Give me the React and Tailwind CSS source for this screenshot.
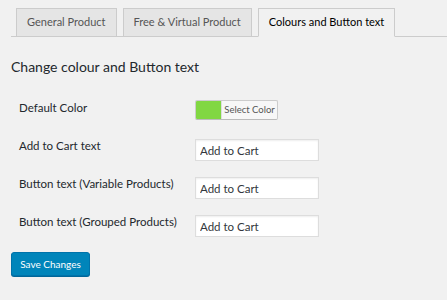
import React from "react";

const tabs = [
  { label: "General Product", active: false },
  { label: "Free & Virtual Product", active: false },
  { label: "Colours and Button text", active: true },
];

const TextRow = ({ label, value }) => (
  <div className="flex items-start h-[38px]">
    <div className="w-[176px] pt-[1px] whitespace-nowrap text-[11.5px] leading-[20px] text-[#23282d]">
      {label}
    </div>
    <input
      type="text"
      defaultValue={value}
      className="w-[124px] h-[22px] mt-[4px] px-[4px] bg-white border border-[#ddd] shadow-[inset_0_1px_2px_rgba(0,0,0,0.07)] text-[11.5px] text-[#32373c] outline-none"
    />
  </div>
);

const App = () => {
  return (
    <div
      className="w-[447px] h-[300px] bg-[#f1f1f1] overflow-hidden"
      style={{ fontFamily: 'Lato, "Open Sans", sans-serif' }}
    >
      <div className="pt-[8px] pl-[11px]">
        <div className="flex items-end gap-[6px] pl-[5px] border-b border-[#ccc]">
          {tabs.map((t) => (
            <div
              key={t.label}
              className={
                t.active
                  ? "h-[29px] -mb-px px-[10px] flex items-center whitespace-nowrap border border-[#ccc] border-b-[#f1f1f1] bg-[#f1f1f1] text-[11px] text-black"
                  : "h-[28px] px-[10px] flex items-center whitespace-nowrap border border-b-0 border-[#ccc] bg-[#e5e5e5] text-[11px] text-[#555]"
              }
            >
              {t.label}
            </div>
          ))}
        </div>

        <h2 className="mt-[20px] text-[14px] leading-[20px] text-[#23282d]">
          Change colour and Button text
        </h2>

        <div className="mt-[21px] pl-[8px]">
          <div className="flex items-start h-[37px]">
            <div className="w-[176px] whitespace-nowrap text-[11.5px] leading-[20px] text-[#23282d]">
              Default Color
            </div>
            <button className="flex mt-[2px] h-[20px] w-[83px] border border-[#ccc] border-b-[#bbb] rounded-[2px] bg-[#f7f7f7] overflow-hidden">
              <span className="w-[25px] h-full bg-[#81d742]" />
              <span className="flex-1 h-full border-l border-[#ddd] flex items-center justify-center whitespace-nowrap text-[9.5px] text-[#555]">
                Select Color
              </span>
            </button>
          </div>
          <TextRow label="Add to Cart text" value="Add to Cart" />
          <TextRow label="Button text (Variable Products)" value="Add to Cart" />
          <TextRow label="Button text (Grouped Products)" value="Add to Cart" />
        </div>

        <button className="mt-[3px] h-[24px] w-[79px] rounded-[3px] border border-[#0073aa] bg-[#0085ba] shadow-[0_1px_0_#006799] whitespace-nowrap text-[10px] text-white">
          Save Changes
        </button>
      </div>
    </div>
  );
};

export default App;
